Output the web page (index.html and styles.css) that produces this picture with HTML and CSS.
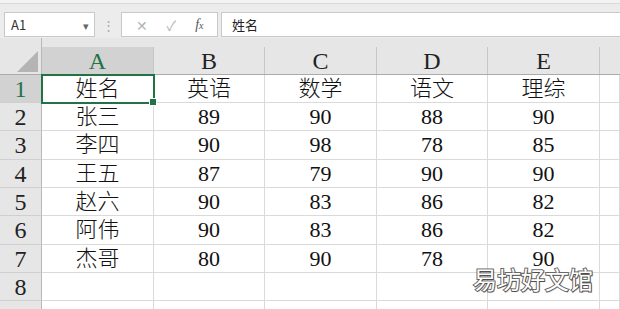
FILE: index.html
```html
<!DOCTYPE html>
<html lang="zh-CN">

<head>
    <meta charset="UTF-8">
    <title>成绩表</title>
    <link rel="stylesheet" href="styles.css">
</head>

<body>
    <div class="top-strip"></div>

    <div class="formula-bar">
        <div class="name-box">
            <span>A1</span>
            <span class="arrow">▾</span>
        </div>
        <div class="grip">⋮</div>
        <div class="fx-box">
            <span class="fx-btn">✕</span>
            <span class="fx-btn">✓</span>
            <span class="fx-btn fx"><i>f</i><i class="x">x</i></span>
        </div>
        <div class="formula-input">姓名</div>
    </div>

    <div class="sheet">
        <!-- 欄標題 -->
        <div class="corner"><div class="tri"></div></div>
        <div class="col-head active"><div>A</div></div>
        <div class="col-head"><div>B</div></div>
        <div class="col-head"><div>C</div></div>
        <div class="col-head"><div>D</div></div>
        <div class="col-head"><div>E</div></div>
        <div class="col-head last"><div></div></div>

        <div class="row-head active">1</div>
        <div class="cell selected">姓名</div>
        <div class="cell">英语</div>
        <div class="cell">数学</div>
        <div class="cell">语文</div>
        <div class="cell">理综</div>
        <div class="cell"></div>

        <div class="row-head">2</div>
        <div class="cell">张三</div>
        <div class="cell">89</div>
        <div class="cell">90</div>
        <div class="cell">88</div>
        <div class="cell">90</div>
        <div class="cell"></div>

        <div class="row-head">3</div>
        <div class="cell">李四</div>
        <div class="cell">90</div>
        <div class="cell">98</div>
        <div class="cell">78</div>
        <div class="cell">85</div>
        <div class="cell"></div>

        <div class="row-head">4</div>
        <div class="cell">王五</div>
        <div class="cell">87</div>
        <div class="cell">79</div>
        <div class="cell">90</div>
        <div class="cell">90</div>
        <div class="cell"></div>

        <div class="row-head">5</div>
        <div class="cell">赵六</div>
        <div class="cell">90</div>
        <div class="cell">83</div>
        <div class="cell">86</div>
        <div class="cell">82</div>
        <div class="cell"></div>

        <div class="row-head">6</div>
        <div class="cell">阿伟</div>
        <div class="cell">90</div>
        <div class="cell">83</div>
        <div class="cell">86</div>
        <div class="cell">82</div>
        <div class="cell"></div>

        <div class="row-head">7</div>
        <div class="cell">杰哥</div>
        <div class="cell">80</div>
        <div class="cell">90</div>
        <div class="cell">78</div>
        <div class="cell">90</div>
        <div class="cell"></div>

        <div class="row-head">8</div>
        <div class="cell"></div>
        <div class="cell"></div>
        <div class="cell"></div>
        <div class="cell"></div>
        <div class="cell"></div>
        <div class="cell"></div>

        <div class="row-head"></div>
        <div class="cell"></div>
        <div class="cell"></div>
        <div class="cell"></div>
        <div class="cell"></div>
        <div class="cell"></div>
        <div class="cell"></div>
    </div>

    <div class="watermark">易坊好文馆</div>
</body>

</html>
```

FILE: styles.css
```css
* {
    box-sizing: border-box;
}

body {
    margin: 0;
    width: 620px;
    height: 309px;
    overflow: hidden;
    position: relative;
    background: #ffffff;
    font-family: "Liberation Serif", "Noto Sans CJK SC", serif;
}

.top-strip {
    height: 4px;
    background: #f3f3f3;
    border-bottom: 1px solid #d9d9d9;
}

.formula-bar {
    height: 34px;
    background: #ececec;
    display: flex;
    align-items: flex-start;
    padding-top: 8px;
    padding-left: 4px;
    font-family: "Noto Sans CJK SC", "Noto Sans", sans-serif;
    font-size: 12px;
    color: #333;
}

.name-box {
    width: 91px;
    height: 25px;
    background: #fff;
    border: 1px solid #c8c8c8;
    display: flex;
    align-items: center;
    justify-content: space-between;
    padding: 0 5px 0 6px;
    font-size: 13px;
}

.name-box .arrow {
    font-size: 11px;
    color: #666;
}

.grip {
    width: 26px;
    text-align: center;
    line-height: 25px;
    color: #aaa;
    font-size: 13px;
}

.fx-box {
    width: 97px;
    height: 25px;
    background: #fff;
    border: 1px solid #c8c8c8;
    display: flex;
    align-items: center;
    justify-content: space-around;
    padding: 0 4px;
}

.fx-btn {
    color: #b4b4b4;
    font-size: 14px;
}

.fx-btn.fx {
    color: #555;
    font-family: "Liberation Serif", serif;
    font-size: 14px;
}

.fx-btn .x {
    font-size: 10px;
}

.formula-input {
    flex: 1;
    height: 25px;
    margin-left: 3px;
    background: #fff;
    border: 1px solid #c8c8c8;
    border-right: none;
    padding-left: 10px;
    line-height: 23px;
    font-size: 13px;
    color: #222;
}

.sheet {
    display: grid;
    grid-template-columns: 42px 112px 111px 112px 111px 112px 20px;
    grid-template-rows: 37px 28px 28px 29px 28px 28px 29px 28px 28px 28px;
    background: #ffffff;
}

.corner {
    background: #e6e6e6;
    border-right: 1px solid #b8b8b8;
    border-bottom: 1px solid #ababab;
    display: flex;
    align-items: flex-end;
    justify-content: flex-end;
    padding: 0 3px 2px 0;
}

.tri {
    width: 0;
    height: 0;
    border-left: 21px solid transparent;
    border-bottom: 21px solid #b4b4b4;
}

.col-head {
    background: #e6e6e6;
    border-bottom: 1px solid #ababab;
    padding-top: 9px;
}

.col-head div {
    height: 27px;
    border-right: 1px solid #c6c6c6;
    text-align: center;
    font-size: 24px;
    line-height: 29px;
    color: #222;
}

.col-head.active div {
    background: #d2d2d2;
    color: #217346;
}

.col-head.last div {
    border-right: none;
}

.row-head {
    background: #e6e6e6;
    border-right: 1px solid #b8b8b8;
    border-bottom: 1px solid #d0d0d0;
    text-align: center;
    font-size: 24px;
    line-height: 29px;
    color: #222;
}

.row-head.active {
    background: #d2d2d2;
    color: #217346;
}

.cell {
    border-right: 1px solid #dadada;
    border-bottom: 1px solid #dadada;
    text-align: center;
    font-size: 22px;
    font-weight: 300;
    line-height: 28px;
    color: #111;
}

.cell.selected {
    position: relative;
    outline: 2px solid #217346;
    outline-offset: -1px;
    z-index: 1;
}

/* 填充控點 */
.cell.selected::after {
    content: "";
    position: absolute;
    right: -4px;
    bottom: -4px;
    width: 6px;
    height: 6px;
    background: #217346;
    border: 1px solid #fff;
}

.watermark {
    position: absolute;
    left: 473px;
    top: 261px;
    font-family: "Noto Sans CJK SC", sans-serif;
    font-size: 24px;
    color: #fff;
    -webkit-text-stroke: 2px #6a6a6a;
    paint-order: stroke fill;
    text-shadow: 1px 1px 1px rgba(0, 0, 0, 0.3);
}
```
